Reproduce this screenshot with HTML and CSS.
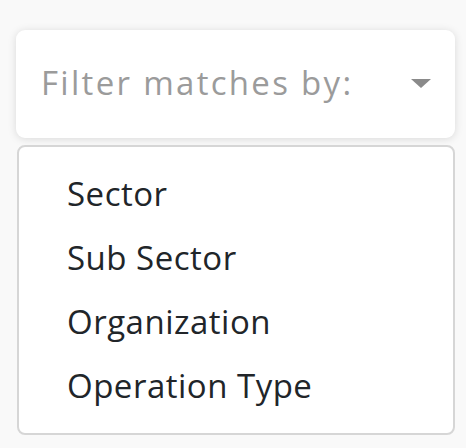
FILE: index.html
```html
<!DOCTYPE html>
<html>
<head>
<meta charset="utf-8">
<link rel="stylesheet" href="styles.css">
</head>
<body>
<div class="wrap">
  <div class="select">
    <span class="placeholder">Filter matches by:</span>
    <span class="caret"></span>
  </div>
  <ul class="menu">
    <li>Sector</li>
    <li>Sub Sector</li>
    <li>Organization</li>
    <li>Operation Type</li>
  </ul>
</div>
</body>
</html>
```
FILE: styles.css
```css
html, body {
  margin: 0;
  padding: 0;
  background: #f9f9f9;
  font-family: "Open Sans", "Liberation Sans", sans-serif;
}
.wrap {
  padding: 30px 0 0 16px;
  width: 439px;
  display: flex;
  flex-direction: column;
  gap: 7px;
}
.select {
  height: 108px;
  background: #fff;
  border-radius: 9px;
  box-shadow: 0 1px 8px rgba(0,0,0,0.13);
  display: flex;
  align-items: center;
  justify-content: space-between;
  padding: 0 24px 0 25px;
  box-sizing: border-box;
}
.placeholder {
  font-size: 33px;
  color: #9b9b9b;
  letter-spacing: 2.3px;
  margin-top: -3px;
}
.caret {
  width: 0;
  height: 0;
  border-left: 10px solid transparent;
  border-right: 10px solid transparent;
  border-top: 9px solid #8a8a8a;
  margin-top: -2px;
}
.menu {
  list-style: none;
  margin: 0;
  margin-left: 1px;
  padding: 14px 0 18px;
  background: #fff;
  border: 2px solid #d6d6d6;
  border-radius: 8px;
  height: 290px;
  box-sizing: border-box;
}
.menu li {
  height: 64px;
  display: flex;
  align-items: center;
  padding-left: 48px;
  font-size: 33px;
  color: #212529;
  letter-spacing: 0.5px;
}
```
